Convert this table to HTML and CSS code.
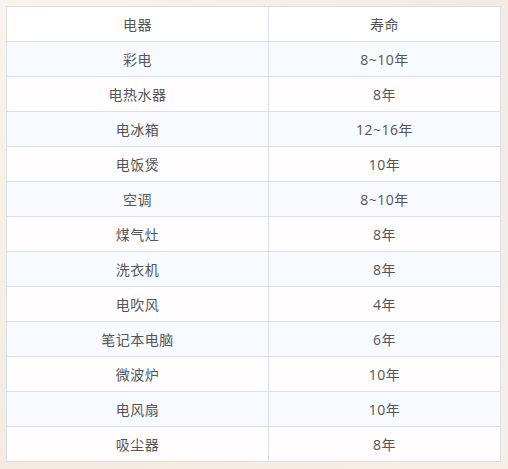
FILE: index.html
```html
<!DOCTYPE html>
<html lang="zh">
<head>
<meta charset="utf-8">
<link rel="stylesheet" href="styles.css">
</head>
<body>
<table class="life">
<thead>
<tr><th>电器</th><th>寿命</th></tr>
</thead>
<tbody>
<tr><td>彩电</td><td>8~10年</td></tr>
<tr><td>电热水器</td><td>8年</td></tr>
<tr><td>电冰箱</td><td>12~16年</td></tr>
<tr><td>电饭煲</td><td>10年</td></tr>
<tr><td>空调</td><td>8~10年</td></tr>
<tr><td>煤气灶</td><td>8年</td></tr>
<tr><td>洗衣机</td><td>8年</td></tr>
<tr><td>电吹风</td><td>4年</td></tr>
<tr><td>笔记本电脑</td><td>6年</td></tr>
<tr><td>微波炉</td><td>10年</td></tr>
<tr><td>电风扇</td><td>10年</td></tr>
<tr><td>吸尘器</td><td>8年</td></tr>
</tbody>
</table>
</body>
</html>
```
FILE: styles.css
```css
html, body {
  margin: 0;
  padding: 0;
}
body {
  background: linear-gradient(135deg, #f8f3ec 0%, #f3ebe0 50%, #f6efe5 100%);
  padding: 6px 0 0 6px;
  height: 469px;
  box-sizing: border-box;
  font-family: "Open Sans", "Noto Sans CJK SC", sans-serif;
}
.life {
  border-collapse: collapse;
  width: 495px;
  background: #fff;
  font-size: 14px;
  color: #555;
}
.life th, .life td {
  border: 1px solid #dcdfe6;
  height: 35px;
  padding: 0;
  text-align: center;
  font-weight: normal;
  box-sizing: border-box;
  letter-spacing: 0.5px;
}
.life th:first-child, .life td:first-child {
  width: 262px;
}
.life thead tr {
  background: #fff;
}
.life tbody tr:nth-child(odd) {
  background: #f7faff;
}
.life tbody tr:nth-child(even) {
  background: #fffdfe;
}
```
